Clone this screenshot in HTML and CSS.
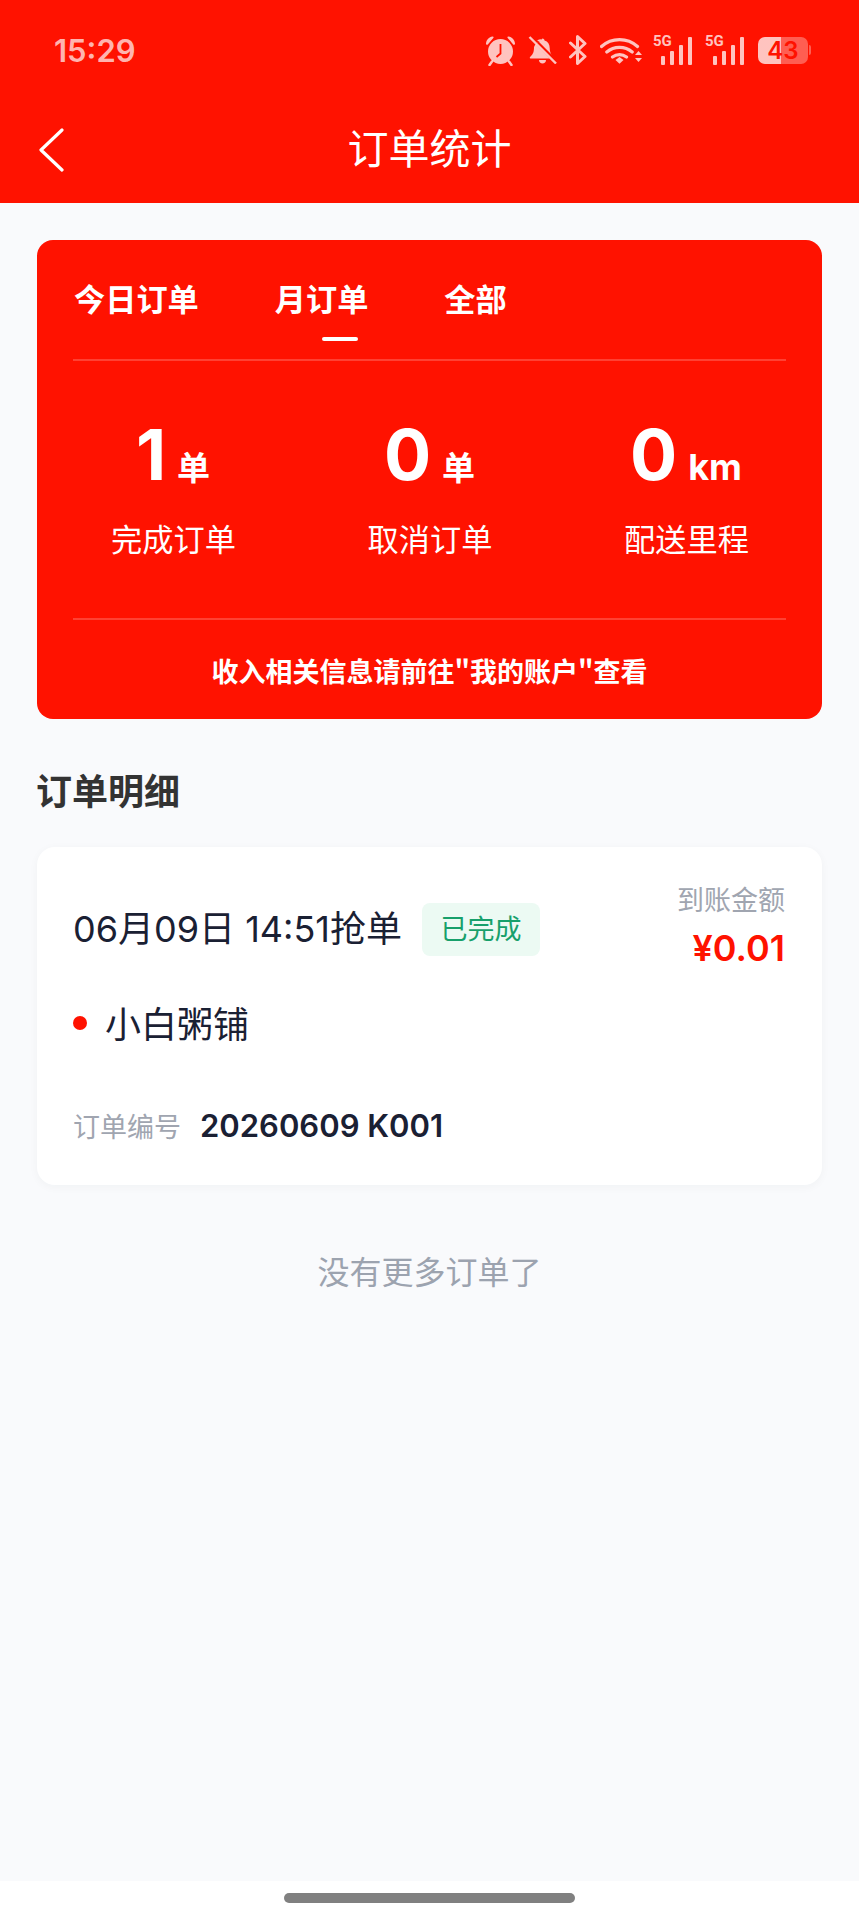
FILE: index.html
```html
<!DOCTYPE html>
<html lang="zh-CN">
<head>
<meta charset="utf-8">
<title>订单统计</title>
<link rel="stylesheet" href="styles.css">
</head>
<body>
<div class="app">
  <header class="header">
    <div class="statusbar">
      <span class="time">15:29</span>
      <div class="status-icons">
        <svg class="ic ic-alarm" viewBox="0 0 31 31"><path d="M1 8.500C1.500 4.500 4 2 7.500 1.500c1-.1 1.500.8.800 1.500L2.800 9.500c-.8.700-1.900 0-1.800-1ZM30 8.500C29.500 4.500 27 2 23.500 1.500c-1-.1-1.500.8-.8 1.500l5.500 6.500c.8.700 1.900 0 1.800-1Z" fill="currentColor"/><circle cx="15.500" cy="16.500" r="12.500" fill="currentColor"/><path d="M15.500 9v9.500l-4 3.500" fill="none" stroke="#ff1200" stroke-width="1.800"/><path d="m7 26.500-2.500 3.500M24 26.500l2.500 3.500" stroke="currentColor" stroke-width="2.500" stroke-linecap="round"/></svg>
        <svg class="ic ic-bell" viewBox="0 0 29 28"><path d="M14.500 2.500c-1.400 0-2 1-2 2-2.500.8-3.800 2.500-4.300 4.500L21.500 22.500H2.500c-.8 0-1-1-.4-1.500C5.500 18 6 15 6 11l1-2M14.500 2.500c1.400 0 2 1 2 2 3.500 1 5.200 4 5.200 7.500 0 3 .8 5.500 2 7.300L8.200 4.500" fill="currentColor"/><path d="M11 24h7c0 2-1.500 3.500-3.500 3.500S11 26 11 24Z" fill="currentColor"/><path d="M1.500 1 28 27.500" stroke="currentColor" stroke-width="2.400"/><path d="M4 0 30 26" stroke="#ff1200" stroke-width="1.500"/></svg>
        <svg class="ic ic-bt" viewBox="0 0 18 30"><path d="M1.500 8 16 21.500 8.500 28.500V1.500L16 8.500 1.500 22" fill="none" stroke="currentColor" stroke-width="3" stroke-linejoin="round" stroke-linecap="round"/></svg>
        <svg class="ic ic-wifi" viewBox="0 0 43 28"><path d="M1.500 10.500a27 27 0 0 1 36 0M6.800 16a19.500 19.500 0 0 1 25.400 0M12.500 21a11.500 11.500 0 0 1 14 0" fill="none" stroke="currentColor" stroke-width="3.200" stroke-linecap="round"/><path d="m15.500 24 4-3 4 3-4 3.800Z" fill="currentColor"/><path d="m35 19 3.500-4 3.500 4ZM35 22h7l-3.500 4Z" fill="currentColor"/></svg>
        <div class="net">
          <span class="net-label">5G</span>
          <div class="bars"><i class="bar b1"></i><i class="bar b2"></i><i class="bar b3"></i><i class="bar b4"></i></div>
        </div>
        <div class="net net-second">
          <span class="net-label">5G</span>
          <div class="bars"><i class="bar b1"></i><i class="bar b2"></i><i class="bar b3"></i><i class="bar b4"></i></div>
        </div>
        <div class="battery"><span class="battery-body">43</span><i class="battery-nub"></i></div>
      </div>
    </div>
    <div class="navbar">
      <svg class="back" viewBox="0 0 26 44"><path d="M24 2 3 22l21 20" fill="none" stroke="#fff" stroke-width="3.200" stroke-linecap="round" stroke-linejoin="round"/></svg>
      <h1 class="title">订单统计</h1>
    </div>
  </header>

  <main class="content">
    <section class="summary">
      <div class="tabs">
        <div class="tab">今日订单</div>
        <div class="tab">月订单<i class="tab-line"></i></div>
        <div class="tab">全部</div>
      </div>
      <div class="stats">
        <div class="stat">
          <div class="stat-value"><span class="num">1</span><span class="unit">单</span></div>
          <div class="stat-label">完成订单</div>
        </div>
        <div class="stat">
          <div class="stat-value"><span class="num">0</span><span class="unit">单</span></div>
          <div class="stat-label">取消订单</div>
        </div>
        <div class="stat">
          <div class="stat-value"><span class="num">0</span><span class="unit unit-km">km</span></div>
          <div class="stat-label">配送里程</div>
        </div>
      </div>
      <div class="summary-note">收入相关信息请前往"我的账户"查看</div>
    </section>

    <h2 class="section-title">订单明细</h2>

    <article class="order">
      <div class="order-top">
        <div class="order-time">
          <span class="time-text">06月09日 14:51抢单</span>
          <span class="badge">已完成</span>
        </div>
        <div class="amount">
          <div class="amount-label">到账金额</div>
          <div class="amount-value">¥0.01</div>
        </div>
      </div>
      <div class="shop"><i class="dot"></i><span>小白粥铺</span></div>
      <div class="order-no"><span class="no-label">订单编号</span><span class="no-value">20260609 K001</span></div>
    </article>

    <div class="no-more">没有更多订单了</div>
  </main>

  <footer class="homebar"><i class="home-indicator"></i></footer>
</div>
</body>
</html>
```
FILE: styles.css
```css
* { box-sizing: border-box; }
html, body { margin: 0; padding: 0; }
body {
  width: 859px;
  height: 1920px;
  overflow: hidden;
  font-family: Inter, "Noto Sans CJK SC", "Noto Sans", sans-serif;
  background: #fff;
}
i { display: block; }
.app { display: flex; flex-direction: column; height: 1920px; background: #f9fafc; }

.header { height: 203px; background: #ff1200; color: #fff; flex: none; }
.statusbar {
  height: 100px;
  padding: 0 48px 0 54px;
  display: flex;
  align-items: center;
  justify-content: space-between;
}
.time { font-size: 31px; font-weight: 600; color: rgba(255,255,255,.7); }
.status-icons { display: flex; align-items: center; color: rgba(255,255,255,.75); }
.ic { display: block; flex: none; }
.ic-alarm { width: 31px; height: 31px; }
.ic-bell { width: 29px; height: 28px; margin-left: 12px; }
.ic-bt { width: 18px; height: 30px; margin-left: 12px; }
.ic-wifi { width: 43px; height: 28px; margin-left: 13px; }
.net { position: relative; width: 40px; height: 30px; margin-left: 9px; }
.net-second { margin-left: 12px; }
.net-label { position: absolute; left: 1px; top: -2px; font-size: 15px; line-height: 16px; font-weight: 700; font-family: Roboto, sans-serif; }
.bars { display: flex; align-items: flex-end; justify-content: flex-end; gap: 5px; height: 30px; }
.bar { width: 4px; background: currentColor; border-radius: 1px; }
.b1 { height: 9px; }
.b2 { height: 14px; }
.b3 { height: 20px; }
.b4 { height: 28px; }
.battery { display: flex; align-items: center; margin-left: 14px; }
.battery-body {
  width: 50px;
  height: 27px;
  border-radius: 7px;
  background: linear-gradient(to right, rgba(255,255,255,.75) 46%, rgba(255,255,255,.32) 46%);
  color: #ff1200;
  font-size: 24px;
  line-height: 27px;
  font-weight: 600;
  text-align: center;
}
.battery-nub { width: 2px; height: 10px; margin-left: 1px; border-radius: 0 2px 2px 0; background: rgba(255,255,255,.32); }

.navbar { position: relative; height: 103px; display: flex; align-items: center; justify-content: center; }
.back { position: absolute; left: 38px; top: 28px; width: 26px; height: 44px; }
.title { margin: -6px 0 0; font-size: 41px; line-height: 52px; font-weight: 400; color: #fff; }

.content { flex: 1; padding: 37px 37px 0; }

.summary { background: #ff1200; border-radius: 16px; height: 479px; padding: 0 36px; color: #fff; display: flex; flex-direction: column; }
.tabs { display: flex; gap: 76px; height: 121px; padding: 40px 0 0 1px; border-bottom: 2px solid rgba(255,255,255,.2); flex: none; }
.tab { font-size: 31.2px; line-height: 40px; font-weight: 700; }
.tab-line { width: 36px; height: 4px; margin: 17px 0 0 50%; background: #fff; border-radius: 2px; }
.stats { display: flex; justify-content: space-between; height: 259px; padding-top: 52px; border-bottom: 2px solid rgba(255,255,255,.2); flex: none; }
.stat { width: 200px; display: flex; flex-direction: column; align-items: center; }
.stat-value { display: flex; align-items: baseline; justify-content: center; height: 84px; line-height: 84px; }
.num { font-size: 70px; font-weight: 700; }
.unit { font-size: 33px; font-weight: 700; margin-left: 11px; }
.unit-km { font-size: 36px; }
.stat-label { font-size: 31.2px; line-height: 44px; margin-top: 21px; padding-left: 1px; }
.summary-note { font-family: "Noto Sans CJK SC", sans-serif; font-size: 27px; line-height: 40px; font-weight: 700; text-align: center; margin-top: 31px; }

.section-title { margin: 53px 0 0 -1px; font-size: 36px; line-height: 40px; font-weight: 700; color: #333; }

.order { margin-top: 35px; height: 338px; background: #fff; border-radius: 18px; padding: 0 37px 0 36px; box-shadow: 0 2px 10px rgba(30,40,60,.04); display: flex; flex-direction: column; }
.order-top { display: flex; justify-content: space-between; align-items: flex-start; padding-top: 34px; height: 134px; }
.order-time { display: flex; align-items: center; margin-top: 22px; }
.time-text { font-size: 36px; line-height: 46px; padding-bottom: 2px; font-weight: 400; color: #1a2033; }
.badge { margin-left: 20px; width: 118px; height: 53px; border-radius: 8px; background: #ecfaf3; color: #17a06b; font-size: 27px; line-height: 53px; text-align: center; }
.amount { text-align: right; }
.amount-label { font-size: 27px; line-height: 40px; color: #a0a5b0; }
.amount-value { font-size: 36px; line-height: 46px; font-weight: 600; color: #ff1200; margin-top: 4px; }
.shop { display: flex; align-items: center; height: 50px; margin-top: 19px; font-size: 36px; line-height: 50px; color: #1a2033; font-weight: 400; }
.dot { width: 14px; height: 14px; border-radius: 50%; background: #ff1200; margin-right: 18px; margin-top: -4px; }
.order-no { display: flex; align-items: center; margin-top: 52px; height: 46px; }
.no-label { font-size: 27px; color: #a0a5b0; width: 127px; flex: none; }
.no-value { font-size: 31px; font-weight: 600; color: #1a2033; }

.no-more { margin-top: 66px; text-align: center; font-size: 32px; line-height: 44px; color: #9ca3af; }

.homebar { height: 39px; flex: none; background: #fff; display: flex; justify-content: center; padding-top: 12px; }
.home-indicator { width: 291px; height: 10px; border-radius: 5px; background: #808080; }
```
